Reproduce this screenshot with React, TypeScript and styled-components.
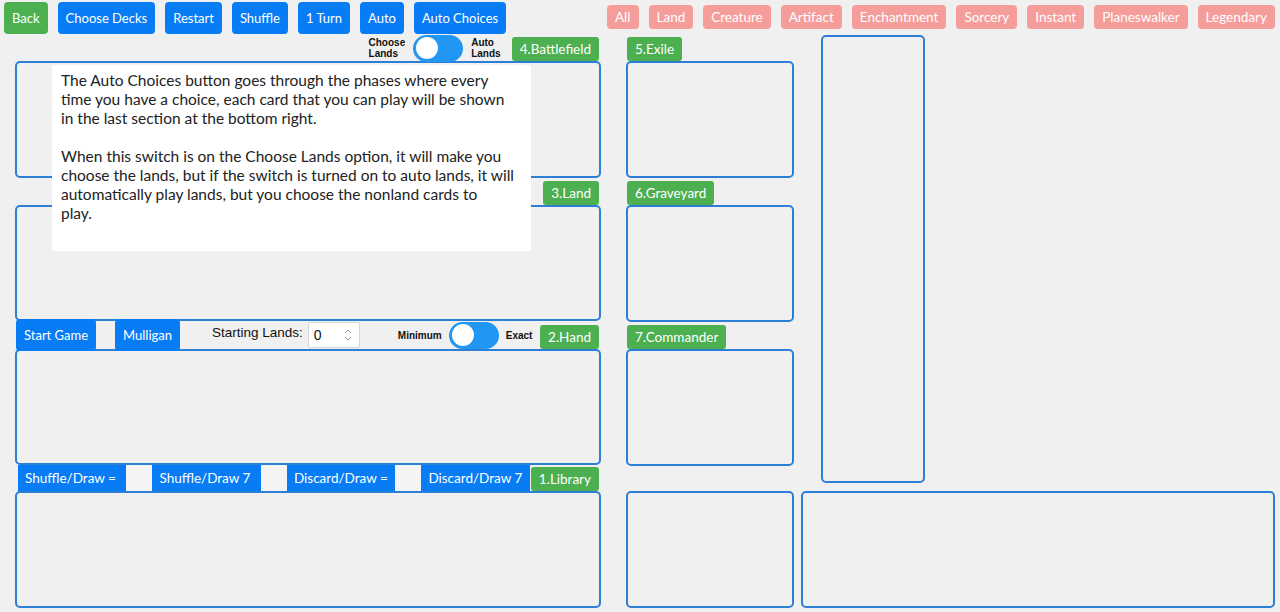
import { createGlobalStyle } from "styled-components";
import styled from "styled-components";

const color = {
  bg: "#f0f0f0",
  blue: "#087cf4",
  green: "#4caf50",
  pink: "#f59d9b",
  border: "#2b7fd6",
  toggle: "#2196f3",
};

const GlobalStyle = createGlobalStyle`
  body {
    margin: 0;
    background: ${color.bg};
    font-family: Lato, "Liberation Sans", sans-serif;
  }
  * {
    white-space: nowrap;
  }
`;

const Page = styled.div`
  position: relative;
  width: 1280px;
  height: 612px;
  overflow: hidden;
`;

const Header = styled.div`
  display: flex;
  height: 35px;
  box-sizing: border-box;
  padding-left: 4px;
`;

const Toolbar = styled.div`
  display: flex;
  flex-shrink: 0;
  gap: 10px;
  width: 603px;
  padding-top: 2px;
  align-items: flex-start;
`;

const Button = styled.button<{ $green?: boolean }>`
  flex-shrink: 0;
  height: 32px;
  padding: 0 8px;
  border: none;
  border-radius: 4px;
  background: ${(p) => (p.$green ? color.green : color.blue)};
  color: #fff;
  font-family: Lato, "Liberation Sans", sans-serif;
  font-size: 13px;
  position: relative;
  z-index: 1;
`;

const Filters = styled.div`
  display: flex;
  gap: 10px;
  padding-top: 5px;
  align-items: flex-start;
`;

const FilterButton = styled.button`
  height: 24px;
  padding: 0 8px;
  border: none;
  border-radius: 4px;
  background: ${color.pink};
  color: #fff;
  font-family: Lato, "Liberation Sans", sans-serif;
  font-size: 13.5px;
`;

const Main = styled.div`
  display: flex;
  padding-left: 15px;
`;

const Column = styled.div<{ $width: number; $offset?: number }>`
  display: flex;
  flex-direction: column;
  flex-shrink: 0;
  width: ${(p) => p.$width}px;
  margin-left: ${(p) => p.$offset ?? 0}px;
`;

const Panel = styled.div<{ $h: number }>`
  box-sizing: border-box;
  height: ${(p) => p.$h}px;
  border: 2px solid ${color.border};
  border-radius: 5px;
`;

const TallPanel = styled(Panel)`
  width: 104px;
  margin-left: 20px;
  margin-bottom: 8px;
`;

const BarRow = styled.div<{ $h: number; $left?: boolean }>`
  display: flex;
  height: ${(p) => p.$h}px;
  align-items: center;
  justify-content: ${(p) => (p.$left ? "flex-start" : "flex-end")};
  padding: 0 2px 0 1px;
`;

const Label = styled.div<{ $push?: boolean }>`
  flex-shrink: 0;
  align-self: flex-end;
  height: 24px;
  line-height: 24px;
  padding: 0 8px;
  margin-left: ${(p) => (p.$push ? "auto" : "0")};
  border-radius: 3px;
  background: ${color.green};
  color: #fff;
  font-size: 13.5px;
  position: relative;
  z-index: 1;
`;

const SmallText = styled.div<{ $gap?: number }>`
  font-family: "Liberation Sans", sans-serif;
  font-weight: bold;
  font-size: 10px;
  line-height: 11px;
  color: #111;
  margin-right: ${(p) => p.$gap ?? 8}px;
`;

const Switch = styled.div<{ $gap?: number }>`
  display: flex;
  align-items: center;
  flex-shrink: 0;
  box-sizing: border-box;
  width: 50px;
  height: 27px;
  padding: 0 3px;
  border-radius: 14px;
  background: ${color.toggle};
  margin-right: ${(p) => p.$gap ?? 8}px;
  position: relative;
  z-index: 1;
`;

const Knob = styled.span`
  width: 22px;
  height: 22px;
  border-radius: 50%;
  background: #fff;
`;

const FieldLabel = styled.span`
  font-family: "Liberation Sans", sans-serif;
  font-size: 13.5px;
  color: #111;
  margin: 0 5px 6px 32px;
`;

const NumberBox = styled.div`
  display: flex;
  align-items: center;
  justify-content: space-between;
  flex-shrink: 0;
  box-sizing: border-box;
  width: 52px;
  height: 26px;
  padding: 0 6px 0 5px;
  background: #fff;
  border: 1px solid #d6d6d6;
  border-radius: 2px;
  margin-right: 38px;
  position: relative;
  z-index: 1;
  font-family: "Liberation Sans", sans-serif;
  font-size: 14px;
  color: #111;
`;

const DrawBar = styled.div`
  display: flex;
  flex: 1;
  height: 26px;
  margin-left: 2px;
  margin-right: 1px;
  background: ${color.blue};
  position: relative;
  z-index: 1;
`;

const DrawButton = styled.div`
  flex: 1;
  padding: 0 0 0 7px;
  line-height: 26px;
  color: #fff;
  font-size: 13.5px;
`;

const DrawInput = styled.div`
  flex: 0 0 26px;
  background: #f4f4f4;
`;

const Spacer = styled.div`
  flex: 0 0 19px;
`;

const Tooltip = styled.div`
  position: absolute;
  left: 52px;
  top: 65px;
  width: 479px;
  height: 186px;
  box-sizing: border-box;
  padding: 6px 9px;
  background: #fff;
  font-family: Lato, "Noto Sans", sans-serif;
  font-size: 15.5px;
  line-height: 19px;
  color: #222;
  z-index: 5;
`;

const Para = styled.p`
  margin: 0 0 19px;
`;

const toolbar = ["Choose Decks", "Restart", "Shuffle", "1 Turn", "Auto", "Auto Choices"];
const filters = [
  "All",
  "Land",
  "Creature",
  "Artifact",
  "Enchantment",
  "Sorcery",
  "Instant",
  "Planeswalker",
  "Legendary",
];

function Spinner() {
  return (
    <svg width="10" height="14" viewBox="0 0 10 14">
      <path d="M2 5 L5 2 L8 5" fill="none" stroke="#9a9a9a" strokeWidth="1" />
      <path d="M2 9 L5 12 L8 9" fill="none" stroke="#9a9a9a" strokeWidth="1" />
    </svg>
  );
}

function App() {
  return (
    <Page>
      <GlobalStyle />
      <Header>
        <Toolbar>
          <Button $green>Back</Button>
          {toolbar.map((t) => (
            <Button key={t}>{t}</Button>
          ))}
        </Toolbar>
        <Filters>
          {filters.map((f) => (
            <FilterButton key={f}>{f}</FilterButton>
          ))}
        </Filters>
      </Header>

      <Main>
        <Column $width={586}>
          <BarRow $h={26}>
            <SmallText>
              Choose
              <br />
              Lands
            </SmallText>
            <Switch>
              <Knob />
            </Switch>
            <SmallText $gap={11}>
              Auto
              <br />
              Lands
            </SmallText>
            <Label>4.Battlefield</Label>
          </BarRow>
          <Panel $h={117} />
          <BarRow $h={27}>
            <Label>3.Land</Label>
          </BarRow>
          <Panel $h={116} />
          <BarRow $h={28} $left>
            <Button>Start Game</Button>
            <Spacer />
            <Button>Mulligan</Button>
            <FieldLabel>Starting Lands:</FieldLabel>
            <NumberBox>
              0
              <Spinner />
            </NumberBox>
            <SmallText $gap={7}>Minimum</SmallText>
            <Switch $gap={7}>
              <Knob />
            </Switch>
            <SmallText $gap={7}>Exact</SmallText>
            <Label $push>2.Hand</Label>
          </BarRow>
          <Panel $h={116} />
          <BarRow $h={26} $left>
            <DrawBar>
              <DrawButton>Shuffle/Draw =</DrawButton>
              <DrawInput />
              <DrawButton>Shuffle/Draw 7</DrawButton>
              <DrawInput />
              <DrawButton>Discard/Draw =</DrawButton>
              <DrawInput />
              <DrawButton>Discard/Draw 7</DrawButton>
            </DrawBar>
            <Label>1.Library</Label>
          </BarRow>
          <Panel $h={117} />
        </Column>

        <Column $width={168} $offset={25}>
          <BarRow $h={26} $left>
            <Label>5.Exile</Label>
          </BarRow>
          <Panel $h={117} />
          <BarRow $h={27} $left>
            <Label>6.Graveyard</Label>
          </BarRow>
          <Panel $h={117} />
          <BarRow $h={27} $left>
            <Label>7.Commander</Label>
          </BarRow>
          <Panel $h={117} />
          <BarRow $h={25} $left />
          <Panel $h={117} />
        </Column>

        <Column $width={474} $offset={7}>
          <TallPanel $h={448} />
          <Panel $h={117} />
        </Column>
      </Main>

      <Tooltip>
        <Para>
          The Auto Choices button goes through the phases where every
          <br />
          time you have a choice, each card that you can play will be shown
          <br />
          in the last section at the bottom right.
        </Para>
        <Para>
          When this switch is on the Choose Lands option, it will make you
          <br />
          choose the lands, but if the switch is turned on to auto lands, it will
          <br />
          automatically play lands, but you choose the nonland cards to
          <br />
          play.
        </Para>
      </Tooltip>
    </Page>
  );
}

export default App;
